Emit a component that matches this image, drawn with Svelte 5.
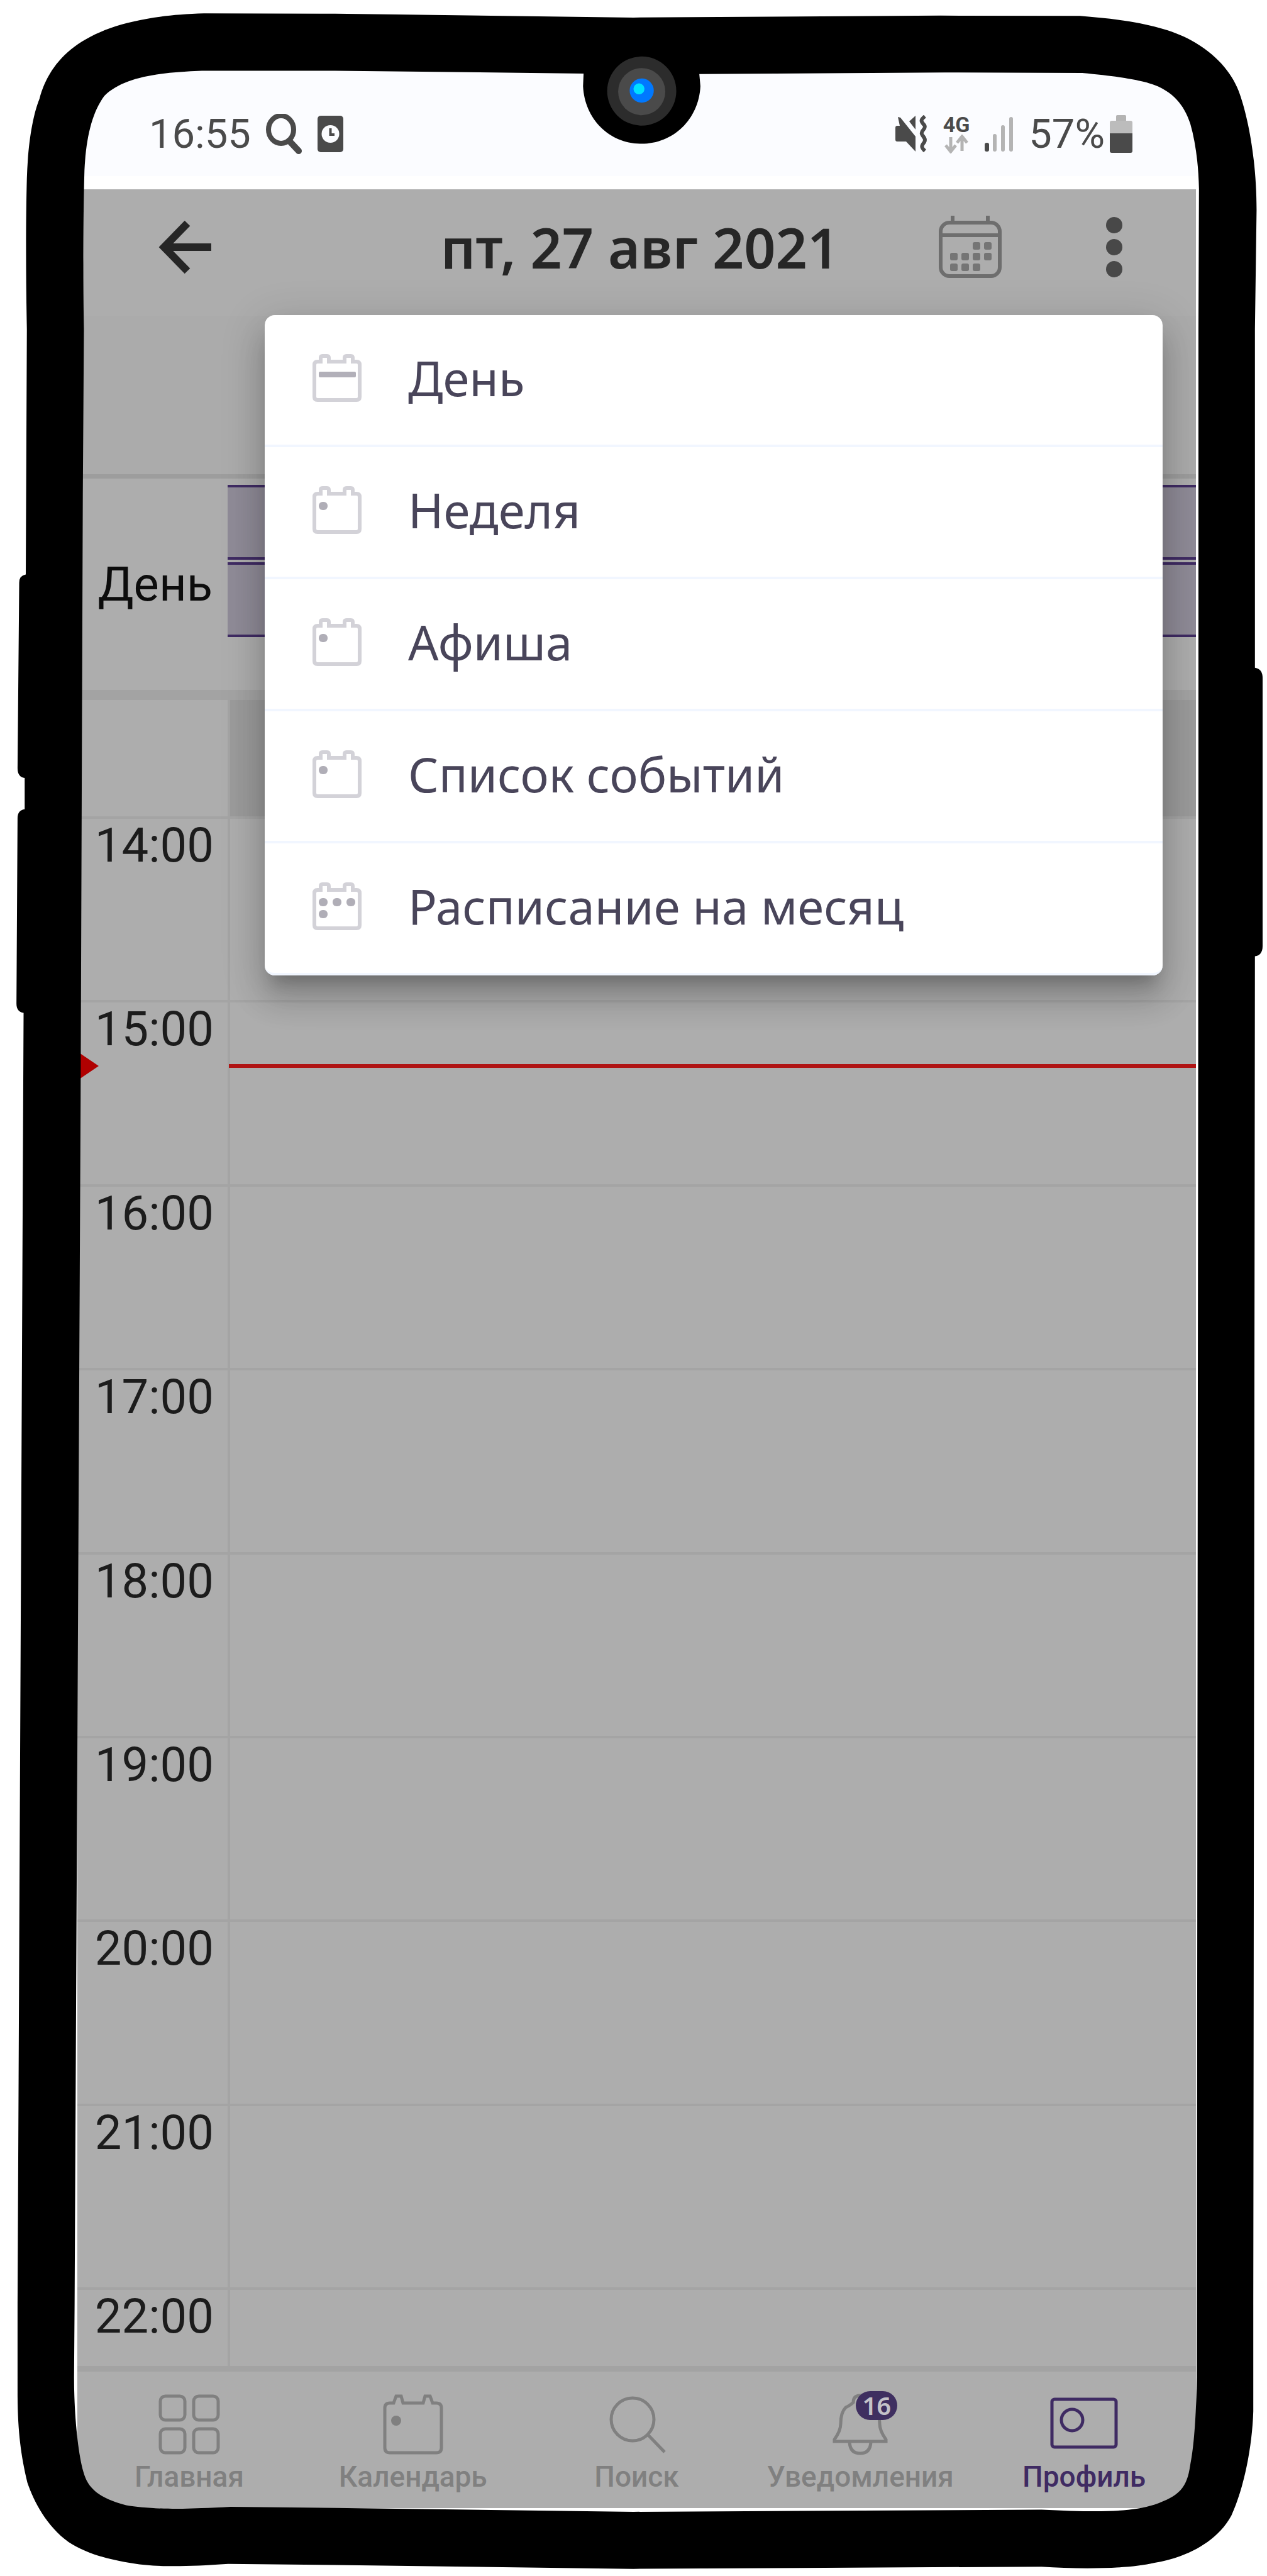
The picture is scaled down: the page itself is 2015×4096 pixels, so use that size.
<script>
  const hours = ['14:00', '15:00', '16:00', '17:00', '18:00', '19:00', '20:00', '21:00', '22:00'];

  const views = [
    { label: 'День', mark: 'bar' },
    { label: 'Неделя', mark: 'dot' },
    { label: 'Афиша', mark: 'dot' },
    { label: 'Список событий', mark: 'dot' },
    { label: 'Расписание на месяц', mark: 'dots' }
  ];

  const tabs = [
    { id: 'home', label: 'Главная' },
    { id: 'calendar', label: 'Календарь' },
    { id: 'search', label: 'Поиск' },
    { id: 'bell', label: 'Уведомления', badge: 16 },
    { id: 'profile', label: 'Профиль', active: true }
  ];
</script>

<div class="phone">
  <div class="screen">
    <div class="status">
      <div class="status-side status-left">
        <span class="clock">16:55</span>
        <svg width="58" height="64" viewBox="0 0 58 64" aria-hidden="true">
          <ellipse cx="24" cy="25" rx="20" ry="22" fill="none" stroke="#4a4a4a" stroke-width="8" />
          <path d="M37 43 L52 59" stroke="#4a4a4a" stroke-width="10" stroke-linecap="round" />
        </svg>
        <svg width="41" height="58" viewBox="0 0 41 58" aria-hidden="true">
          <rect width="41" height="58" rx="5" fill="#4a4a4a" />
          <circle cx="20.500" cy="29" r="14" fill="#fbfcff" />
          <path d="M20.500 20 V30 H27" fill="none" stroke="#4a4a4a" stroke-width="4" />
        </svg>
      </div>
      <div class="status-side status-right">
        <svg width="52" height="60" viewBox="0 0 52 60" aria-hidden="true">
          <path d="M0 20 Q0 17 3 17 H7 L4 3 L8 4 L32 34 V58 L17 42 H3 Q0 42 0 39Z" fill="#4a4a4a" />
          <path d="M32 1 V23 L22 10Z" fill="#4a4a4a" />
          <path d="M47 2 C38 9 42 11 46 16 C50 22 40 24 42 30 C44 35 49 37 46 43 C42 48 40 51 47 57" fill="none" stroke="#4a4a4a" stroke-width="6" />
        </svg>
        <span class="network">
          <span class="network-name">4G</span>
          <svg width="38" height="30" viewBox="0 0 38 30" aria-hidden="true">
            <path d="M10 4 V27 M2 17 L10 27 L18 17 M28 26 V4 M20 13 L28 3 L36 13" fill="none" stroke="#b4b4b4" stroke-width="5" />
          </svg>
        </span>
        <svg width="46" height="58" viewBox="0 0 46 58" aria-hidden="true">
          <rect x="0" y="43" width="7" height="14" rx="3" fill="#4a4a4a" />
          <rect x="13" y="29" width="6" height="28" rx="3" fill="#b4b4b4" />
          <rect x="26" y="15" width="6" height="42" rx="3" fill="#b4b4b4" />
          <rect x="39" y="2" width="6" height="55" rx="3" fill="#b4b4b4" />
        </svg>
        <span class="charge">
          57%
          <svg width="36" height="60" viewBox="0 0 36 60" aria-hidden="true">
            <rect x="10" y="0" width="16" height="12" rx="2" fill="#b4b4b4" />
            <path d="M0 12 Q0 9 3 9 H33 Q36 9 36 12 V30 H0Z" fill="#bcbcbc" />
            <path d="M0 29 H36 V57 Q36 60 33 60 H3 Q0 60 0 57Z" fill="#4a4a4a" />
          </svg>
        </span>
      </div>
    </div>

    <div class="app">
      <header class="topbar">
        <button class="icon-button" type="button" aria-label="Назад">
          <svg width="90" height="84" viewBox="0 0 90 84">
            <path d="M87 42 H12 M49 4 L12 42 L49 80" fill="none" stroke="#262626" stroke-width="12" />
          </svg>
        </button>
        <h1>пт, 27 авг 2021</h1>
        <div class="actions">
          <button class="icon-button" type="button" aria-label="Выбрать дату">
            <svg width="102" height="102" viewBox="0 0 102 102">
              <g fill="none" stroke="#6e6e6e" stroke-width="6">
                <rect x="4" y="12" width="94" height="85" rx="14" />
                <path d="M4 32 H98 M23 1 V13 M79 1 V13" />
              </g>
              <g fill="#757575">
                <rect x="55" y="43" width="12" height="12" rx="3" /><rect x="73" y="43" width="12" height="12" rx="3" />
                <rect x="19" y="60" width="12" height="12" rx="3" /><rect x="37" y="60" width="12" height="12" rx="3" />
                <rect x="55" y="60" width="12" height="12" rx="3" /><rect x="73" y="60" width="12" height="12" rx="3" />
                <rect x="19" y="77" width="12" height="12" rx="3" /><rect x="37" y="77" width="12" height="12" rx="3" />
                <rect x="55" y="77" width="12" height="12" rx="3" />
              </g>
            </svg>
          </button>
          <button class="icon-button" type="button" aria-label="Меню" aria-expanded="true">
            <svg width="28" height="100" viewBox="0 0 28 100" fill="#484848">
              <circle cx="14" cy="15" r="13" /><circle cx="14" cy="50" r="13" /><circle cx="14" cy="85" r="13" />
            </svg>
          </button>
        </div>
      </header>

      <main>
        <div class="spacer"></div>
        <section class="allday">
          <div class="allday-label">День</div>
          <div class="allday-events">
            <div class="event"></div>
            <div class="event"></div>
          </div>
        </section>
        <div class="past">
          <div class="gutter"></div>
          <div class="past-fill"></div>
        </div>
        <div class="hours">
          {#each hours as hour}
            <div class="hour">
              <div class="gutter"><time>{hour}</time></div>
              <div class="slot"></div>
            </div>
          {/each}
          <div class="now">
            <svg width="34" height="46" viewBox="0 0 34 46" aria-hidden="true"><path d="M0 0 L34 23 L0 46Z" fill="#b00000" /></svg>
            <div class="now-line"></div>
          </div>
        </div>
      </main>

      <nav>
        {#each tabs as tab}
          <a href="#{tab.id}" class:active={tab.active}>
            <span class="tab-icon">
              {#if tab.id === 'home'}
                <svg width="98" height="98" viewBox="0 0 98 98">
                  <rect x="3" y="4" width="39" height="38" rx="8" /><rect x="56" y="4" width="39" height="38" rx="8" />
                  <rect x="3" y="56" width="39" height="38" rx="8" /><rect x="56" y="56" width="39" height="38" rx="8" />
                </svg>
              {:else if tab.id === 'calendar'}
                <svg width="98" height="98" viewBox="0 0 98 98">
                  <path d="M12 15 H18 L22 4 H30 L33 15 H65 L68 4 H76 L80 15 H86 Q94 15 94 23 V86 Q94 94 86 94 H12 Q4 94 4 86 V23 Q4 15 12 15Z" />
                  <circle class="solid" cx="22" cy="43" r="8" />
                </svg>
              {:else if tab.id === 'search'}
                <svg width="98" height="98" viewBox="0 0 98 98">
                  <circle cx="43" cy="41" r="34" /><path d="M67 65 L94 93" />
                </svg>
              {:else if tab.id === 'bell'}
                <svg width="98" height="98" viewBox="0 0 98 98">
                  <path d="M8 73 Q18 59 18 48 Q18 30 26 22 Q34 18 38 14 Q38 3 49 3 Q60 3 60 14 Q64 18 72 22 Q80 30 80 48 Q80 59 90 73 V76 H8Z" />
                  <path d="M32 77 Q33 95 49 95 Q65 95 66 77" />
                </svg>
              {:else}
                <svg width="110" height="98" viewBox="0 0 110 98">
                  <rect x="4" y="9" width="102" height="76" rx="4" /><circle cx="36" cy="42" r="17" />
                </svg>
              {/if}
              {#if tab.badge}<span class="badge">{tab.badge}</span>{/if}
            </span>
            <span>{tab.label}</span>
          </a>
        {/each}
      </nav>

      <div class="menu" role="menu">
        {#each views as view}
          <button class="menu-item" type="button" role="menuitem">
            <svg width="82" height="80" viewBox="0 0 82 80" aria-hidden="true">
              <path d="M10 14 H15 V8 Q15 5 18 5 H25 Q28 5 28 8 V14 H53 V8 Q53 5 56 5 H63 Q66 5 66 8 V14 H72 Q77 14 77 19 V70 Q77 75 72 75 H10 Q5 75 5 70 V19 Q5 14 10 14Z" fill="none" stroke="#d3d2d8" stroke-width="6" />
              {#if view.mark === 'bar'}
                <rect x="12" y="30" width="59" height="9" rx="2" fill="#b2b0b9" />
              {:else}
                <rect x="12" y="27" width="14" height="13" rx="6" fill="#b0aeb7" />
              {/if}
              {#if view.mark === 'dots'}
                <rect x="34" y="27" width="14" height="13" rx="6" fill="#b0aeb7" />
                <rect x="56" y="27" width="14" height="13" rx="6" fill="#b0aeb7" />
                <rect x="12" y="46" width="14" height="13" rx="6" fill="#b0aeb7" />
              {/if}
            </svg>
            <span>{view.label}</span>
          </button>
        {/each}
      </div>
    </div>
  </div>

  <svg class="frame" viewBox="0 0 2310 4695" preserveAspectRatio="none" aria-hidden="true">
    <path
      fill-rule="evenodd"
      d="M372 24.500 L611 25 L1155 32 L1715 28.500 L1969 29
        C2060 36 2125 48 2171 73 C2218 99 2245 132 2258 165 C2275 210 2291 290 2291 383 L2288 600
        L2288 1217 Q2302 1219 2302 1236 L2302 1724 Q2302 1741 2288 1743
        L2285 4200 V4395 C2283 4460 2268 4535 2245 4585 C2215 4640 2150 4664 2105 4671
        C2060 4682 1970 4683 1899 4678 L1155 4682 L611 4675 L416 4673
        C330 4679 280 4678 243 4672 C190 4664 155 4652 125 4633 C85 4604 62 4560 50 4525
        C38 4475 32 4430 32 4360 L32 4200 L43 1846 Q30 1844 30 1829 L32 1491 Q32 1477 45 1475
        L45 1418 Q32 1416 32 1400 L35 1062 Q35 1049 47 1047 L49 600
        C47 500 47 400 49 325 C51 260 60 210 72 180 C95 95 170 30 372 24.500Z
        M368 129 L611 129 L1064 134 L1063 157
        C1066 218 1112 262 1169.500 262 C1227 262 1274 218 1277 157 L1275 135
        L1722 132 L1973 133 C2050 140 2087 148 2105 155 C2145 170 2162 200 2170 225
        C2180 260 2185 300 2186 344 L2185 600 L2185 1500 L2182 4333
        C2181 4400 2177 4460 2170 4493 C2164 4535 2150 4549 2105 4565
        C2060 4579 2000 4579 1899 4574 L1155 4578 L611 4571 L420 4569
        C330 4574 270 4573 230 4566 C180 4553 160 4535 152 4505
        C142 4470 135 4400 135 4333 L136 4200 L147 2000 L151 900 L153 600
        C151 500 152 380 154 310 C157 250 168 205 190 175 C225 140 290 132 368 129Z"
    />
    <circle cx="1170" cy="166" r="63" fill="#2c2c2c" />
    <circle cx="1170" cy="167" r="43" fill="#4a4a4a" />
    <circle cx="1170" cy="165" r="22" fill="#0078ff" />
    <circle cx="1165" cy="162" r="10" fill="#00e0ff" />
  </svg>
</div>

<style>
  :global(body) {
    margin: 0;
    background: #fff;
  }

  .phone {
    position: relative;
    box-sizing: border-box;
    padding: 96px 113px 108px 123px;
    font-family: 'Noto Sans', 'Open Sans', sans-serif;
  }

  .frame {
    position: absolute;
    inset: 0;
    width: 100%;
    height: 100%;
    pointer-events: none;
  }

  svg {
    display: block;
    flex: none;
  }

  button {
    border: 0;
    padding: 0;
    background: none;
    font: inherit;
    color: inherit;
    cursor: pointer;
  }

  .status {
    display: flex;
    justify-content: space-between;
    align-items: center;
    box-sizing: border-box;
    height: 205px;
    padding: 50px 101px 0 114px;
    border-bottom: 21px solid #fff;
    background: #fbfcff;
    color: #4a4a4a;
    font-family: Roboto, sans-serif;
    font-size: 65px;
    line-height: 80px;
  }

  .status-side {
    display: flex;
    align-items: center;
    gap: 24px;
  }

  .network {
    display: flex;
    flex-direction: column;
    align-items: center;
  }

  .network-name {
    font-size: 34px;
    font-weight: 700;
    line-height: 32px;
  }

  .charge {
    display: flex;
    align-items: center;
    gap: 8px;
  }

  .app {
    position: relative;
    background: #adadad;
  }

  .topbar {
    display: grid;
    grid-template-columns: 1fr auto 1fr;
    align-items: center;
    box-sizing: border-box;
    height: 201px;
    padding: 0 116px 18px 126px;
  }

  h1 {
    margin: 0;
    color: #262626;
    font-size: 88px;
    font-weight: 600;
    line-height: 96px;
    white-space: nowrap;
  }

  .actions {
    display: flex;
    justify-content: flex-end;
    align-items: center;
    gap: 164px;
  }

  .spacer {
    height: 252px;
    border-bottom: 7px solid #9d9d9d;
    background: #ababab;
  }

  .allday {
    display: flex;
    height: 336px;
    border-bottom: 16px solid #a3a3a3;
  }

  .allday-label {
    display: flex;
    align-items: center;
    justify-content: flex-end;
    box-sizing: border-box;
    width: 239px;
    padding-right: 24px;
    color: #0c0c0c;
    font-family: Roboto, sans-serif;
    font-size: 76px;
    line-height: 84px;
  }

  .allday-events {
    display: flex;
    flex: 1;
    flex-direction: column;
    gap: 4px;
    padding-top: 10px;
  }

  .event {
    height: 111px;
    border: solid #3f2b63;
    border-width: 4px 0;
    background: #8f8b97;
  }

  .past {
    display: flex;
    height: 185px;
  }

  .gutter {
    box-sizing: border-box;
    width: 243px;
    border-right: 4px solid #a4a4a4;
  }

  .past-fill {
    flex: 1;
    background: #9b9b9b;
  }

  .hours {
    position: relative;
    display: grid;
    grid-template-rows: repeat(8, 1fr) 125px;
    height: 2464px;
    border-bottom: 9px solid #a3a3a3;
  }

  .hour {
    display: flex;
    box-sizing: border-box;
    border-top: 4px solid #a4a4a4;
  }

  .hour .gutter {
    padding-right: 22px;
    text-align: right;
  }

  .slot {
    flex: 1;
  }

  time {
    display: block;
    color: #1c1c1c;
    font-family: Roboto, sans-serif;
    font-size: 76px;
    line-height: 84px;
  }

  .now {
    position: absolute;
    top: 374px;
    left: 0;
    right: 0;
    display: flex;
    align-items: center;
    justify-content: space-between;
  }

  .now-line {
    width: calc(100% - 241px);
    height: 6px;
    background: #b01414;
  }

  nav {
    display: grid;
    grid-template-columns: repeat(5, 1fr);
    box-sizing: border-box;
    height: 217px;
    padding-top: 35px;
    font-family: Roboto, sans-serif;
    font-size: 46px;
    font-weight: 500;
    line-height: 60px;
  }

  nav a {
    display: flex;
    flex-direction: column;
    align-items: center;
    gap: 4px;
    color: #808080;
    text-decoration: none;
  }

  nav a.active {
    color: #3f2b63;
  }

  .tab-icon {
    position: relative;
  }

  .tab-icon svg {
    fill: none;
    stroke: currentColor;
    stroke-width: 5px;
  }

  .tab-icon .solid {
    fill: currentColor;
    stroke: none;
  }

  .badge {
    position: absolute;
    top: -4px;
    left: 42px;
    width: 66px;
    border-radius: 23px;
    background: #3f2f60;
    color: #c4c2c8;
    font-family: 'Noto Sans', sans-serif;
    font-size: 40px;
    font-weight: 600;
    line-height: 46px;
    text-align: center;
  }

  .menu {
    position: absolute;
    top: 200px;
    left: 298px;
    right: 53px;
    border-radius: 16px;
    background: #fff;
    box-shadow:
      0 24px 24px -14px rgba(0, 0, 0, 0.2),
      0 38px 48px 5px rgba(0, 0, 0, 0.14),
      0 14px 66px 10px rgba(0, 0, 0, 0.12);
  }

  .menu-item {
    display: flex;
    align-items: center;
    gap: 72px;
    box-sizing: border-box;
    width: 100%;
    height: 210px;
    padding: 0 74px 6px;
    border-bottom: 4px solid #f1f6ff;
    color: #49455a;
    font-size: 76px;
    line-height: 104px;
    white-space: nowrap;
  }

  .menu-item:last-child {
    border-radius: 0 0 16px 16px;
  }
</style>
